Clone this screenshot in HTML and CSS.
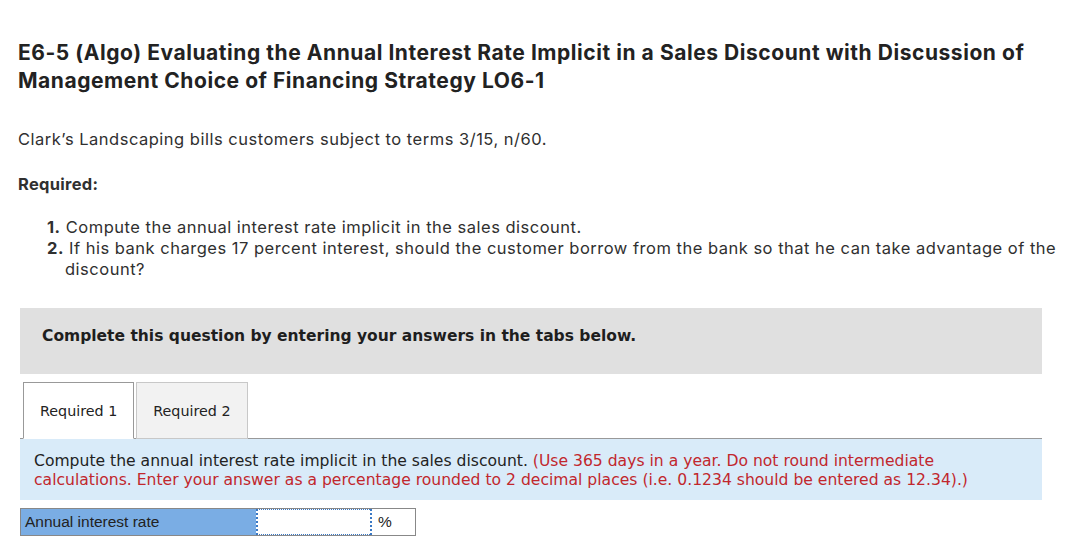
FILE: index.html
```html
<!DOCTYPE html>
<html lang="en">
<head>
    <meta charset="UTF-8">
    <meta name="viewport" content="width=device-width, initial-scale=1.0">
    <title>E6-5 (Algo)</title>
    <link rel="stylesheet" href="styles.css">
</head>
<body>
    <div class="page">
        <h1 class="title">E6-5 (Algo) Evaluating the Annual Interest Rate Implicit in a Sales Discount with Discussion of Management Choice of Financing Strategy LO6-1</h1>
        <p class="intro">Clark’s Landscaping bills customers subject to terms 3/15, n/60.</p>
        <p class="req-label">Required:</p>
        <ol class="req-list">
            <li><b>1.</b> Compute the annual interest rate implicit in the sales discount.</li>
            <li><b>2.</b> If his bank charges 17 percent interest, should the customer borrow from the bank so that he can take advantage of the discount?</li>
        </ol>

        <div class="notice">Complete this question by entering your answers in the tabs below.</div>

        <div class="tabs">
            <button type="button" class="tab active">Required 1</button>
            <button type="button" class="tab">Required 2</button>
        </div>
        <div class="tab-panel">
            Compute the annual interest rate implicit in the sales discount. <span class="hint">(Use 365 days in a year. Do not round intermediate calculations. Enter your answer as a percentage rounded to 2 decimal places (i.e. 0.1234 should be entered as 12.34).)</span>
        </div>

        <div class="answer-row">
            <label class="answer-label" for="rate">Annual interest rate</label>
            <input type="text" id="rate" class="answer-input">
            <span class="answer-unit">%</span>
        </div>
    </div>
</body>
</html>
```

FILE: styles.css
```css
body {
    margin: 0;
    background: #fff;
    color: #303030;
    font-family: "Inter", "Open Sans", sans-serif;
}
.page {
    width: 1048px;
    padding: 39px 0 0 18px;
}
.title {
    margin: 0;
    font-size: 21px;
    line-height: 28px;
    font-weight: 700;
    letter-spacing: 0.55px;
    color: #222;
}
.intro {
    margin: 34px 0 0;
    font-size: 16.5px;
    line-height: 20px;
    letter-spacing: 0.5px;
}
.req-label {
    margin: 25px 0 0;
    font-size: 16.5px;
    line-height: 20px;
    font-weight: 700;
    letter-spacing: 0.3px;
}
.req-list {
    list-style: none;
    margin: 23px 0 0;
    padding: 0 0 0 29px;
    font-size: 16.5px;
    line-height: 21px;
    letter-spacing: 0.5px;
}
.req-list li {
    padding-left: 18px;
    text-indent: -18px;
}
.notice {
    margin: 28px 24px 0 2px;
    padding: 18px 22px 28px;
    background: #e0e0e0;
    font-family: "DejaVu Sans", Verdana, sans-serif;
    font-size: 15.5px;
    line-height: 20px;
    font-weight: 700;
    color: #1e1e1e;
}
.tabs {
    display: flex;
    gap: 2px;
    margin: 8px 24px 0 2px;
    padding-left: 3px;
    border-bottom: 1px solid #999;
}
.tab {
    height: 57px;
    padding: 0 16px;
    margin-bottom: -1px;
    border: 1px solid #c8c8c8;
    background: #f2f2f2;
    font-family: "DejaVu Sans", Verdana, sans-serif;
    font-size: 14.3px;
    color: #222;
}
.tab.active {
    background: #fff;
    border-color: #999;
    border-bottom-color: #fff;
}
.tab-panel {
    margin: 0 24px 0 2px;
    padding: 13px 14px 10px;
    background: #d9ebf9;
    font-family: "DejaVu Sans", Verdana, sans-serif;
    font-size: 15.6px;
    line-height: 19px;
    color: #222;
}
.hint {
    color: #c1272d;
}
.answer-row {
    display: flex;
    width: 396px;
    height: 28px;
    margin: 8px 0 0 2px;
    border: 1px solid #888;
    box-sizing: border-box;
}
.answer-label {
    width: 231px;
    padding-left: 4px;
    background: #7aade4;
    font-family: "Liberation Sans", Arial, sans-serif;
    font-size: 15.5px;
    line-height: 26px;
    color: #222;
}
.answer-input {
    width: 116px;
    margin: 0;
    padding: 0 4px;
    border: 1px dotted #3a78c4;
    border-width: 1px 2px;
    box-sizing: border-box;
    outline: none;
}
.answer-unit {
    padding-left: 6px;
    font-family: "Liberation Sans", Arial, sans-serif;
    font-size: 15.5px;
    line-height: 26px;
    color: #222;
}
```
